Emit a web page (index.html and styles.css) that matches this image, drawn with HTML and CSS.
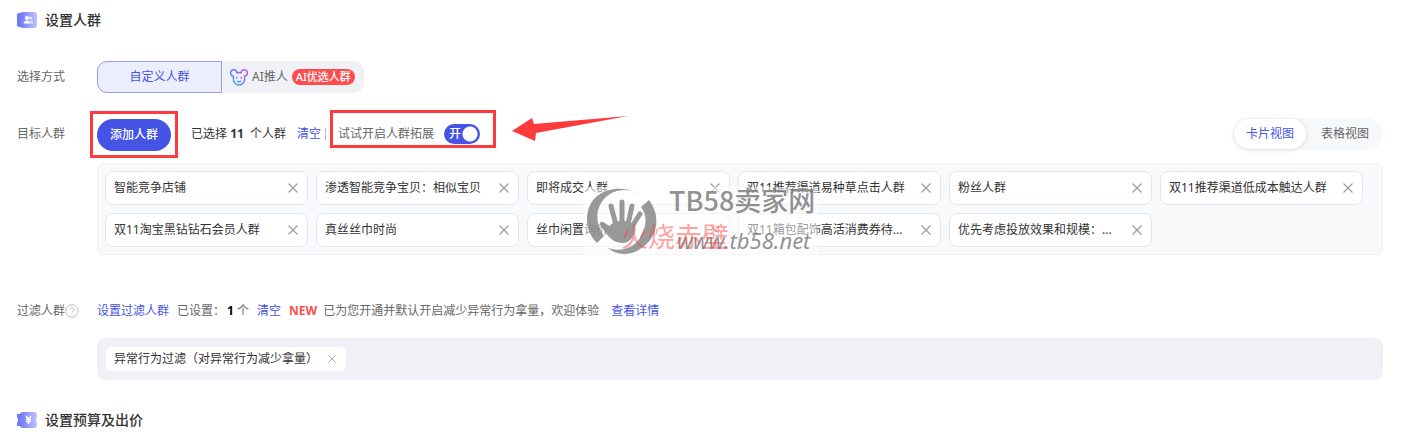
FILE: index.html
```html
<!DOCTYPE html>
<html lang="zh-CN">
<head>
  <meta charset="UTF-8" />
  <meta name="viewport" content="width=device-width, initial-scale=1.0"/>
  <title>设置人群</title>
  <link rel="stylesheet" href="styles.css">
</head>
<body>
  <svg class="defs" width="0" height="0" aria-hidden="true">
    <defs>
      <linearGradient id="iconBack" x1="0" x2="1">
        <stop offset="0" stop-color="#6a70f6"/>
        <stop offset="1" stop-color="#a3a8ff"/>
      </linearGradient>
      <linearGradient id="iconFront" x1="0" x2="1">
        <stop offset="0" stop-color="#7178f5"/>
        <stop offset="1" stop-color="#c0c6ff"/>
      </linearGradient>
      <linearGradient id="mouse" x1="0" y1="1" x2="1" y2="0">
        <stop offset="0" stop-color="#25b9ff"/>
        <stop offset="0.5" stop-color="#5b7cff"/>
        <stop offset="1" stop-color="#e04be8"/>
      </linearGradient>
      <symbol id="close" viewBox="0 0 10 10">
        <path d="M0.5 0.5L9.5 9.5M9.5 0.5L0.5 9.5" fill="none" stroke="#999" stroke-width="1.1"/>
      </symbol>
    </defs>
  </svg>

  <main class="page">
    <!-- 设置人群 -->
    <h2 class="section-title">
      <svg class="section-icon" viewBox="0 0 20 16">
        <rect x="0" y="1" width="12" height="14" rx="2" fill="url(#iconBack)"/>
        <rect x="3" y="0" width="17" height="16" rx="3" fill="url(#iconFront)"/>
        <circle cx="10" cy="6" r="2" fill="#fff"/>
        <path d="M6.5 11.5c0-4 7-4 7 0z" fill="#fff"/>
        <circle cx="13.5" cy="6" r="1.5" fill="#fff" opacity="0.8"/>
        <path d="M13.5 8.5c1.800 0 2.500 1.200 2.500 3h-2z" fill="#fff" opacity="0.8"/>
      </svg>
      设置人群
    </h2>

    <div class="row row-mode">
      <div class="row-label">选择方式</div>
      <div class="segment">
        <button type="button" class="segment-item active">自定义人群</button>
        <button type="button" class="segment-item">
          <svg class="mouse-icon" viewBox="0 0 18 17">
            <g fill="none" stroke="url(#mouse)" stroke-width="1.4" stroke-linecap="round">
              <path d="M3.600 7.200A3.200 3.200 0 1 1 6.900 3.800Q9 3.200 11.100 3.800A3.200 3.200 0 1 1 14.400 7.200C15.300 11.500 13.500 16 9 16C4.500 16 2.700 11.500 3.600 7.200Z"/>
              <path d="M6.800 8.500v0.800M11.200 8.500v0.800M7.500 12.300q1.500 1 3 0"/>
            </g>
          </svg>
          <span>AI推人</span>
          <span class="tag">AI优选人群</span>
        </button>
      </div>
    </div>

    <div class="row row-target">
      <div class="row-label">目标人群</div>
      <div class="toolbar">
        <div class="marked mark-add">
          <button type="button" class="add-btn">添加人群</button>
        </div>
        <span class="count">已选择 <b>11</b> 个人群</span>
        <a href="#" class="link">清空</a>
        <span class="divider"></span>
        <label class="marked mark-expand">
          <span>试试开启人群拓展</span>
          <span class="switch">
            <input type="checkbox" checked />
            <span class="switch-text">开</span>
          </span>
        </label>
        <svg class="arrow" viewBox="0 0 116 26">
          <path d="M0 16L20 3L22 9L116 1L24 18L23 26Z" fill="#fd3b3b"/>
        </svg>
        <div class="views">
          <button type="button" class="view active">卡片视图</button>
          <button type="button" class="view">表格视图</button>
        </div>
      </div>
    </div>

    <div class="cards">
      <div class="card"><span class="card-text">智能竞争店铺</span><button type="button" class="close" aria-label="删除"><svg><use href="#close"/></svg></button></div>
      <div class="card"><span class="card-text">渗透智能竞争宝贝：相似宝贝</span><button type="button" class="close" aria-label="删除"><svg><use href="#close"/></svg></button></div>
      <div class="card"><span class="card-text">即将成交人群</span><button type="button" class="close" aria-label="删除"><svg><use href="#close"/></svg></button></div>
      <div class="card"><span class="card-text">双11推荐渠道易种草点击人群</span><button type="button" class="close" aria-label="删除"><svg><use href="#close"/></svg></button></div>
      <div class="card"><span class="card-text">粉丝人群</span><button type="button" class="close" aria-label="删除"><svg><use href="#close"/></svg></button></div>
      <div class="card"><span class="card-text">双11推荐渠道低成本触达人群</span><button type="button" class="close" aria-label="删除"><svg><use href="#close"/></svg></button></div>
      <div class="card"><span class="card-text">双11淘宝黑钻钻石会员人群</span><button type="button" class="close" aria-label="删除"><svg><use href="#close"/></svg></button></div>
      <div class="card"><span class="card-text">真丝丝巾时尚</span><button type="button" class="close" aria-label="删除"><svg><use href="#close"/></svg></button></div>
      <div class="card"><span class="card-text">丝巾闲置询价</span><button type="button" class="close" aria-label="删除"><svg><use href="#close"/></svg></button></div>
      <div class="card"><span class="card-text">双11箱包配饰高活消费券待...</span><button type="button" class="close" aria-label="删除"><svg><use href="#close"/></svg></button></div>
      <div class="card"><span class="card-text">优先考虑投放效果和规模：...</span><button type="button" class="close" aria-label="删除"><svg><use href="#close"/></svg></button></div>

      <!-- 水印 -->
      <div class="watermark">
        <svg class="hand" viewBox="0 0 75 68">
          <g fill="#888">
            <path d="M58 9C44-4 4-2 4 33C4 42 8 50 14 56L21 49C6 29 18 3 42 3C49 3 54 6 58 9Z"/>
            <path d="M66 13C78 29 75 49 60 60C49 69 34 69 25 61C40 66 52 60 58 49C64 38 64 28 58 20Z"/>
            <path d="M27 39C30 32 49 33 51 38C54 45 48 56 40 56C32 56 27 52 23 46L17 38C16 34 20 34 23 37Z"/>
          </g>
          <g fill="none" stroke="#888" stroke-width="5" stroke-linecap="round">
            <path d="M33 38L28 19M39 37V15M45 37L49 19M48 41L57 27"/>
          </g>
        </svg>
        <div class="wm-texts">
          <div class="wm-name">TB58卖家网</div>
          <div class="wm-url">www.tb58.net</div>
        </div>
        <div class="wm-red">火烧赤壁</div>
      </div>
    </div>

    <div class="row row-filter">
      <div class="row-label">过滤人群<svg class="help" viewBox="0 0 14 14">
          <g fill="none" stroke="#bbb">
            <circle cx="7" cy="7" r="6.200"/>
            <path d="M5 5.600C5 3.200 9 3.200 9 5.500C9 7 7 7 7 8.600M7 9.800V11"/>
          </g>
        </svg></div>
      <div class="filter-info">
        <a href="#" class="link">设置过滤人群</a>
        <span>已设置：<b>1</b>个</span>
        <a href="#" class="link">清空</a>
        <span><strong class="new">NEW</strong> 已为您开通并默认开启减少异常行为拿量，欢迎体验</span>
        <a href="#" class="link detail">查看详情</a>
      </div>
    </div>

    <div class="filters">
      <div class="filter-chip"><span>异常行为过滤（对异常行为减少拿量）</span><button type="button" class="close small" aria-label="删除"><svg><use href="#close"/></svg></button></div>
    </div>

    <!-- 设置预算及出价 -->
    <h2 class="section-title">
      <svg class="section-icon" viewBox="0 0 20 16">
        <path d="M0 2h12v12H0v-3q2-3 0-6z" fill="url(#iconBack)"/>
        <path d="M6 0h11q3 0 3 3v2q-2 3 0 6v2q0 3-3 3H6q-3 0-3-3v-2q2-3 0-6V3q0-3 3-3z" fill="url(#iconFront)"/>
        <path d="M9 4L11.500 7L14 4M11.500 7V12M9 7.500H14M9 9.500H14" fill="none" stroke="#fff" stroke-width="1.500"/>
      </svg>
      设置预算及出价
    </h2>
  </main>
</body>
</html>
```

FILE: styles.css
```css
* {
  box-sizing: border-box;
}

body {
  margin: 0;
  background: #fff;
  color: #333;
  font-family: "Noto Sans", "Noto Sans CJK SC", sans-serif;
  font-size: 12px;
  line-height: 20px;
}

button {
  font: inherit;
  color: inherit;
  border: none;
  background: none;
  padding: 0;
  cursor: pointer;
}

.defs {
  position: absolute;
}

.page {
  padding: 10px 19px 12px 17px;
}

.section-title {
  display: flex;
  align-items: center;
  gap: 8px;
  margin: 0;
  font-size: 14px;
  font-weight: 500;
  line-height: 20px;
}

.section-icon {
  width: 20px;
  height: 16px;
}

.row {
  display: flex;
  align-items: center;
}

.row-label {
  display: flex;
  align-items: center;
  flex: 0 0 80px;
  color: #666;
}

.row-mode {
  margin-top: 31px;
}

/* 选择方式 */
.segment {
  display: flex;
  height: 32px;
  border-radius: 10px;
  background: #f0f1f6;
}

.segment-item {
  display: flex;
  align-items: center;
  gap: 4px;
  padding: 0 9px 0 8px;
  color: #666;
}

.segment-item.active {
  justify-content: center;
  width: 125px;
  padding: 0;
  border: 1px solid #959df0;
  border-radius: 10px 0 0 10px;
  background: #eceefc;
  color: #4554e5;
}

.mouse-icon {
  width: 18px;
  height: 17px;
}

.tag {
  padding: 0 4px;
  border-radius: 8px;
  background: #ff4d4d;
  color: #fff;
  font-size: 11px;
  font-weight: 500;
  line-height: 16px;
}

/* 目标人群 */
.row-target {
  margin-top: 24px;
}

.toolbar {
  display: flex;
  flex: 1;
  align-items: center;
}

.marked {
  position: relative;
}

.marked::after {
  content: "";
  position: absolute;
  border: 3px solid #fd3b3b;
  pointer-events: none;
}

.mark-add::after {
  inset: -6px -7px -7px;
}

.mark-expand::after {
  inset: -14px -16px -4px -8px;
}

.add-btn {
  display: block;
  width: 74px;
  height: 32px;
  margin-top: 2px;
  border-radius: 16px;
  background: #4554e5;
  color: #fff;
  font-weight: 500;
}

.count {
  margin: 0 11px 0 20px;
}

.count b {
  margin-right: 3px;
}

.link {
  color: #4554e5;
  text-decoration: none;
}

.divider {
  width: 1px;
  height: 12px;
  margin: 0 12px 0 4px;
  background: #bbb;
}

.mark-expand {
  display: flex;
  align-items: center;
  gap: 10px;
  color: #666;
}

.switch {
  position: relative;
  display: block;
  height: 20px;
}

.switch input {
  appearance: none;
  display: block;
  width: 36px;
  height: 20px;
  margin: 0;
  border-radius: 10px;
  background: radial-gradient(circle at 26px 10px, #fff 7px, #4554e5 8px);
}

.switch-text {
  position: absolute;
  top: 0;
  left: 5px;
  color: #fff;
  font-weight: 500;
}

.arrow {
  width: 116px;
  height: 26px;
  margin: -12px 0 0 32px;
}

.views {
  display: flex;
  margin-left: auto;
  padding: 1px;
  border-radius: 16px;
  background: #f7f8fa;
}

.view {
  height: 30px;
  padding: 0 13px;
  border-radius: 15px;
  color: #666;
}

.view.active {
  padding: 0 12px;
  margin-right: 2px;
  background: #fff;
  box-shadow: 0 1px 5px rgba(0, 0, 0, 0.12);
  color: #4554e5;
}

.cards {
  position: relative;
  display: grid;
  grid-template-columns: repeat(6, 1fr);
  gap: 8px;
  margin: 12px 0 0 80px;
  padding: 7px 19px 7px 7px;
  border: 1px solid #eff0f5;
  border-radius: 8px;
  background: #f8f9fb;
}

.card {
  display: flex;
  align-items: center;
  justify-content: space-between;
  min-width: 0;
  height: 34px;
  padding: 0 9px 0 8px;
  border: 1px solid #e3e6f0;
  border-radius: 8px;
  background: #fff;
}

.card-text {
  overflow: hidden;
  white-space: nowrap;
  text-overflow: ellipsis;
}

.close {
  flex: none;
  width: 10px;
  height: 10px;
}

.close svg {
  display: block;
  width: 100%;
  height: 100%;
}

.close.small {
  width: 8px;
  height: 8px;
}

/* 水印 */
.watermark {
  position: absolute;
  top: 23px;
  left: 485px;
  display: flex;
  width: 235px;
  height: 68px;
  background: rgba(255, 255, 255, 0.5);
  pointer-events: none;
}

.hand {
  width: 75px;
  height: 68px;
  opacity: 0.85;
}

.wm-texts {
  margin-left: 11px;
  color: rgba(110, 110, 110, 0.75);
  white-space: nowrap;
}

.wm-name {
  font-family: "Noto Sans CJK SC", sans-serif;
  font-size: 27px;
  font-weight: 500;
  line-height: 26px;
}

.wm-url {
  padding-left: 8px;
  font-size: 22px;
  font-style: italic;
  line-height: 54px;
}

.wm-red {
  position: absolute;
  top: 34px;
  left: 38px;
  color: rgba(255, 70, 70, 0.5);
  font-size: 27px;
  line-height: 32px;
  white-space: nowrap;
}

/* 过滤人群 */
.row-filter {
  margin-top: 46px;
}

.help {
  width: 14px;
  height: 14px;
}

.filter-info {
  display: flex;
  gap: 8px;
  color: #666;
}

.filter-info b {
  margin: 0 3px 0 2px;
  color: #000;
}

.new {
  margin-right: 3px;
  color: #ff4d4d;
}

.detail {
  margin-left: 4px;
}

.filters {
  display: flex;
  margin: 17px 0 30px 80px;
  padding: 9px;
  border-radius: 8px;
  background: #f0f1f6;
}

.filter-chip {
  display: flex;
  align-items: center;
  gap: 10px;
  height: 24px;
  padding: 0 10px 0 8px;
  border-radius: 6px;
  background: #fff;
}
```
